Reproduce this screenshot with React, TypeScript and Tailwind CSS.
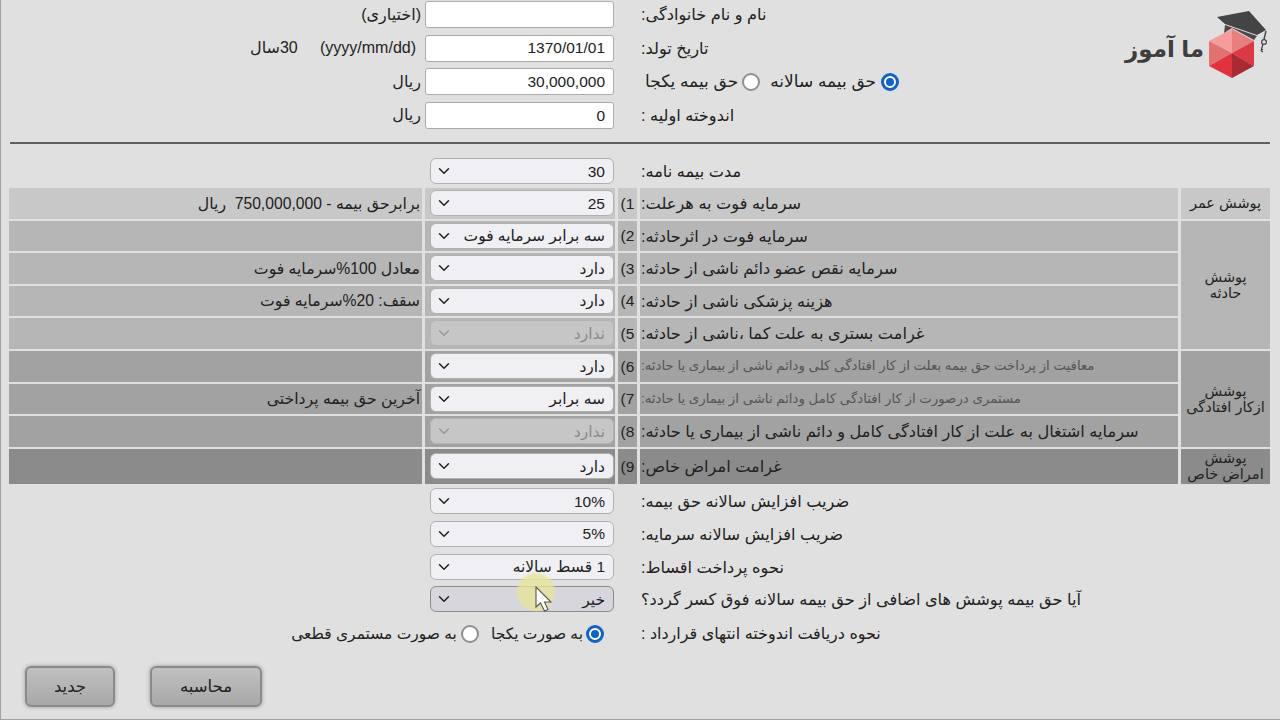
import React from "react";
import { ChevronDown } from "lucide-react";

const GRID = "grid grid-cols-[89px_538px_19px_190px_413px] gap-x-[3px]";

function Select({ value, disabled, hover }: { value: string; disabled?: boolean; hover?: boolean }) {
  const tone = disabled
    ? "bg-[#c6c6c6] border-[#b4b4b4] text-[#8a8a8a]"
    : hover
    ? "bg-[#d6d6dc] border-[#8c8c8c] text-[#222]"
    : "bg-[#f0f0f4] border-[#b0b0b0] text-[#222]";
  return (
    <div className={`h-[26px] w-[184px] mr-[1px] flex items-center justify-between rounded-[6px] border pr-[8px] pl-[4px] text-[15.5px] ${tone}`}>
      <span>{value}</span>
      <ChevronDown size={18} strokeWidth={2} className={disabled ? "text-[#999]" : "text-[#222]"} />
    </div>
  );
}

function Input({ value }: { value?: string }) {
  return (
    <div className="h-[27px] w-[189px] flex items-center rounded-[3px] border border-[#aaa] bg-white px-[8px] text-[15.5px] text-[#222]">
      {value}
    </div>
  );
}

function Radio({ on }: { on?: boolean }) {
  return on ? (
    <span className="w-[18px] h-[18px] shrink-0 rounded-full border-[3px] border-[#0f62c6] bg-white flex items-center justify-center">
      <span className="w-[8px] h-[8px] rounded-full bg-[#0f62c6]" />
    </span>
  ) : (
    <span className="w-[18px] h-[18px] shrink-0 rounded-full border-[2.5px] border-[#8f8f8f] bg-white" />
  );
}

function Logo() {
  return (
    <div className="row-span-4 flex items-start gap-[0px] pt-[9px]">
      <svg width="65" height="70" viewBox="1205 9 65 70" className="shrink-0">
        <polygon points="1232,28 1254,40 1232,52" fill="#e87e7e" />
        <polygon points="1232,28 1209,40 1232,52" fill="#f79c9c" />
        <polygon points="1209,40 1209,65 1232,52" fill="#e27272" />
        <polygon points="1254,40 1254,65 1232,52" fill="#dc3742" />
        <polygon points="1209,65 1232,77 1232,52" fill="#e0333e" />
        <polygon points="1254,65 1232,77 1232,52" fill="#a82a33" />
        <polygon points="1217,16 1249,10 1266,29 1257,34 1225,23" fill="#444" />
        <path d="M1225 24 L1224 32 L1232 27 L1254 39 L1257 35 Z" fill="#4a4a4a" />
        <path d="M1266 30 L1264 38" stroke="#444" strokeWidth="1.4" fill="none" />
        <circle cx="1264" cy="41" r="2.4" fill="none" stroke="#444" strokeWidth="1.2" />
        <path d="M1263 43 L1261 50 M1261 48 L1263 49 M1261 50 L1263 51" stroke="#444" strokeWidth="1.2" fill="none" />
      </svg>
      <span className="mt-[22px] w-[80px] text-left text-[#3d3d3d] text-[23px] leading-[34px] font-bold whitespace-nowrap">ما آموز</span>
    </div>
  );
}

function TopRow({ label, children, side }: { label: React.ReactNode; children: React.ReactNode; side?: React.ReactNode }) {
  return (
    <>
      <div className="flex items-center justify-end text-[16.2px] text-[#222] whitespace-nowrap">{label}</div>
      <div className="pr-[27px] flex items-center">{children}</div>
      <div className="flex items-center pr-[4px] text-[16px] text-[#222] whitespace-pre">{side}</div>
    </>
  );
}

function Row({
  n, label, select, side, bg, small, disabled,
}: { n: string; label: string; select: string; side?: string; bg: string; small?: boolean; disabled?: boolean }) {
  return (
    <>
      <div className={`${bg} flex items-center justify-end pl-[1px] whitespace-nowrap ${small ? "text-[13.3px] text-[#555]" : "text-[16.2px] text-[#222]"}`}>{label}</div>
      <div dir="ltr" className={`${bg} flex items-center justify-center text-[15.5px] text-[#222]`}>{n}</div>
      <div className={`${bg} flex items-center`}><Select value={select} disabled={disabled} /></div>
      <div className={`${bg} flex items-center pr-[2px] text-[15.7px] text-[#222] whitespace-pre`}>{side}</div>
    </>
  );
}

function PlainRow({ label, select, hover }: { label: string; select: string; hover?: boolean }) {
  return (
    <div className={`${GRID} h-[27px]`}>
      <div />
      <div className="flex items-center justify-end pl-[1px] text-[16.2px] text-[#222] whitespace-nowrap">{label}</div>
      <div />
      <div className="flex items-center"><Select value={select} hover={hover} /></div>
      <div />
    </div>
  );
}

export default function App() {
  const g1 = "bg-[#c8c8c8]", g2 = "bg-[#b6b6b6]", g3 = "bg-[#a2a2a2]", g4 = "bg-[#8b8b8b]";
  const groupText = "flex items-center justify-center text-center text-[14.5px] leading-[16px] text-[#222]";
  return (
    <div
      dir="rtl"
      className="relative w-[1280px] h-[720px] overflow-hidden bg-[#e0e0e0] border-l border-b border-[#a0a0a0] pr-[10px] pt-[1px]"
      style={{ fontFamily: '"Liberation Sans", "DejaVu Sans", sans-serif' }}
    >
      <div className="grid grid-cols-[145px_484px_216px_1fr] auto-rows-[27px] gap-y-[6.6px]">
        <Logo />
        <TopRow label="نام و نام خانوادگی:" side="(اختیاری)"><Input /></TopRow>
        <TopRow label="تاریخ تولد:" side={<span className="pr-[5px]">(yyyy/mm/dd)     30سال</span>}><Input value="1370/01/01" /></TopRow>
        <TopRow
          label={
            <span className="flex items-center pl-[4px] text-[17px]">
              <Radio on /><span className="mr-[5px] ml-[10px]">حق بیمه سالانه</span><Radio /><span className="mr-[4px]">حق بیمه یکجا</span>
            </span>
          }
          side="ریال"
        >
          <Input value="30,000,000" />
        </TopRow>
        <TopRow label="اندوخته اولیه :" side="ریال"><Input value="0" /></TopRow>
      </div>

      <div className="mt-[13px] ml-[9px] h-[2px] bg-[#5f5f5f]" />

      <div className={`${GRID} h-[27px] mt-[14px]`}>
        <div />
        <div className="flex items-center justify-end pl-[1px] text-[16.2px] text-[#222]">مدت بیمه نامه:</div>
        <div />
        <div className="flex items-center"><Select value="30" /></div>
        <div />
      </div>

      <div className={`${GRID} grid-rows-[31px_30px_31px_30px_31px_31px_30px_31px_35px] gap-y-[2px] mt-[3px]`}>
        <div className={`${g1} ${groupText}`}>پوشش عمر</div>
        <Row n="(1" label="سرمایه فوت به هرعلت:" select="25" side="برابرحق بیمه - 750,000,000  ریال" bg={g1} />

        <div className={`${g2} ${groupText} row-span-4`}>پوشش<br />حادثه</div>
        <Row n="(2" label="سرمایه فوت در اثرحادثه:" select="سه برابر سرمایه فوت" bg={g2} />
        <Row n="(3" label="سرمایه نقص عضو دائم ناشی از حادثه:" select="دارد" side="معادل 100%سرمایه فوت" bg={g2} />
        <Row n="(4" label="هزینه پزشکی ناشی از حادثه:" select="دارد" side="سقف: 20%سرمایه فوت" bg={g2} />
        <Row n="(5" label="غرامت بستری به علت کما ،ناشی از حادثه:" select="ندارد" bg={g2} disabled />

        <div className={`${g3} ${groupText} row-span-3`}>پوشش<br />ازکار افتادگی</div>
        <Row n="(6" label="معافیت از پرداخت حق بیمه بعلت از کار افتادگی کلی ودائم ناشی از بیماری یا حادثه:" select="دارد" bg={g3} small />
        <Row n="(7" label="مستمری درصورت از کار افتادگی کامل ودائم ناشی از بیماری یا حادثه:" select="سه برابر" side="آخرین حق بیمه پرداختی" bg={g3} small />
        <Row n="(8" label="سرمایه اشتغال به علت از کار افتادگی کامل و دائم ناشی از بیماری یا حادثه:" select="ندارد" bg={g3} disabled />

        <div className={`${g4} ${groupText}`}>پوشش<br />امراض خاص</div>
        <Row n="(9" label="غرامت امراض خاص:" select="دارد" bg={g4} />
      </div>

      <div className="mt-[4px] flex flex-col gap-y-[5.7px]">
        <PlainRow label="ضریب افزایش سالانه حق بیمه:" select="10%" />
        <PlainRow label="ضریب افزایش سالانه سرمایه:" select="5%" />
        <PlainRow label="نحوه پرداخت اقساط:" select="1 قسط سالانه" />
        <PlainRow label="آیا حق بیمه پوشش های اضافی از حق بیمه سالانه فوق کسر گردد؟" select="خیر" hover />
      </div>

      <div className={`${GRID} h-[26px] mt-[8px]`}>
        <div />
        <div className="flex items-center justify-end pl-[1px] text-[16px] text-[#222]">نحوه دریافت اندوخته انتهای قرارداد :</div>
        <div className="col-span-3 flex items-center pr-[33px] text-[15.5px] text-[#222] whitespace-nowrap">
          <Radio on /><span className="mr-[3px] ml-[12px]">به صورت یکجا</span><Radio /><span className="mr-[4px]">به صورت مستمری قطعی</span>
        </div>
      </div>

      <div className="flex justify-end gap-[35px] pl-[24px] mt-[19px]">
        <button className="w-[112px] h-[41px] rounded-[6px] border-2 border-[#8a8a8a] bg-gradient-to-b from-[#c0c0c0] to-[#a8a8a8] text-[16.5px] text-[#222] shadow-[0_0_4px_#999]">محاسبه</button>
        <button className="w-[90px] h-[41px] rounded-[6px] border-2 border-[#8a8a8a] bg-gradient-to-b from-[#c0c0c0] to-[#a8a8a8] text-[16.5px] text-[#222] shadow-[0_0_4px_#999]">جدید</button>
      </div>

      <div className="absolute left-[516px] top-[573px] w-[38px] h-[38px] rounded-full bg-[#e8e49a] opacity-80 blur-[1px]" />
      <svg className="absolute left-[534px] top-[586px]" width="20" height="27" viewBox="0 0 20 27">
        <path d="M1 1 L1 21 L5.5 17 L9.5 25 L13 23.5 L9.5 16 L16 16 Z" fill="#fff" stroke="#555" strokeWidth="1.1" />
      </svg>
    </div>
  );
}
